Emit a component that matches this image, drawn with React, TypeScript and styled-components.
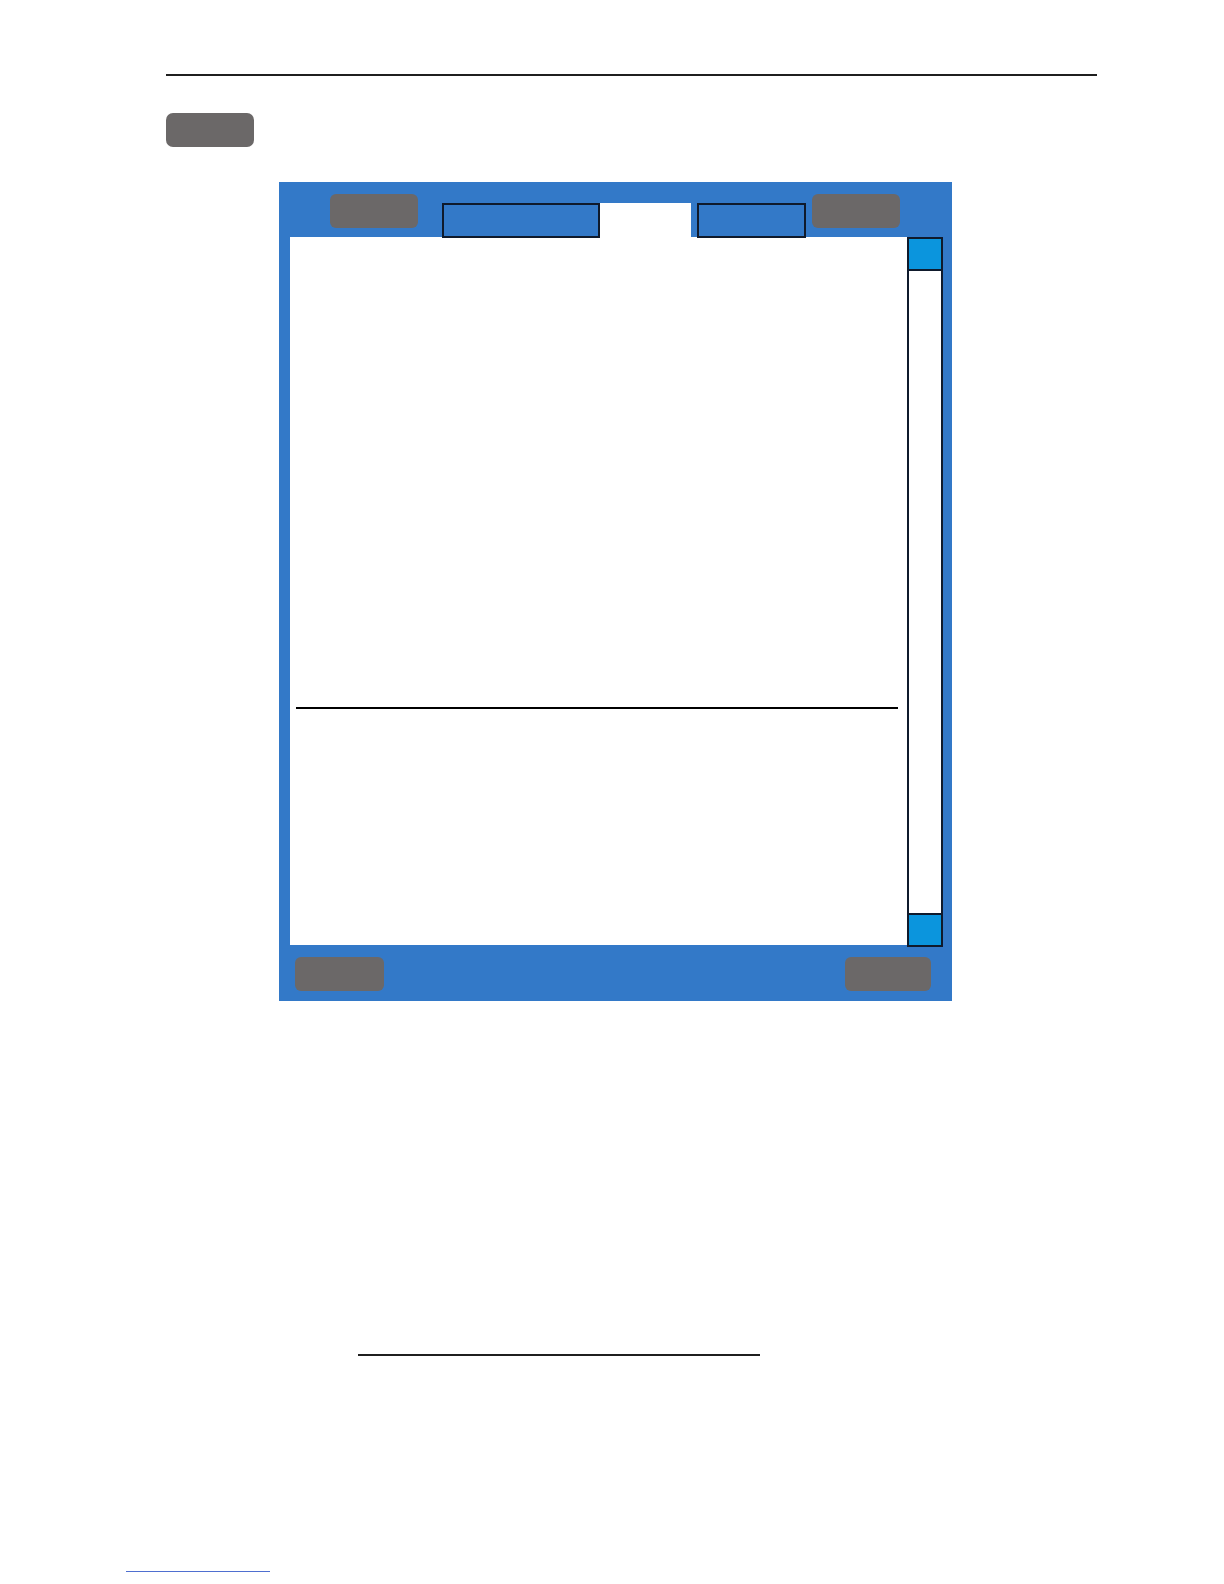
import React from 'react';
import styled, { createGlobalStyle } from 'styled-components';

const colors = {
    panel: '#3379c8',
    button: '#6b6868',
    thumb: '#0b95dd',
    ink: '#1f1f1f',
    frame: '#0f1a2c',
    link: '#4f6fd0',
};

const GlobalStyle = createGlobalStyle`
    html, body {
        margin: 0;
        padding: 0;
        background: #ffffff;
        font-family: "Liberation Sans", Arial, sans-serif;
    }
`;

const Page = styled.div`
    width: 1224px;
    height: 1584px;
    display: flex;
    flex-direction: column;
    align-items: flex-start;
    overflow: hidden;
`;

const Rule = styled.hr<{ $top: number; $left: number; $width: number }>`
    margin: ${({ $top }) => $top}px 0 0 ${({ $left }) => $left}px;
    width: ${({ $width }) => $width}px;
    height: 2px;
    border: none;
    background: ${colors.ink};
`;

const Badge = styled.div`
    margin: 37px 0 0 166px;
    width: 88px;
    height: 34px;
    border-radius: 7px;
    background: ${colors.button};
`;

const Panel = styled.section`
    margin: 35px 0 0 279px;
    width: 673px;
    height: 819px;
    background: ${colors.panel};
    display: flex;
    flex-direction: column;
`;

const TopBar = styled.div`
    height: 55px;
    display: flex;
    align-items: flex-start;
    padding-left: 51px;
    position: relative;
    z-index: 1;
`;

const SoftKey = styled.div<{ $width?: number }>`
    width: ${({ $width }) => $width ?? 88}px;
    height: 34px;
    border-radius: 6px;
    background: ${colors.button};
`;

const TopKey = styled(SoftKey)<{ $gap?: number }>`
    margin: 12px 0 0 ${({ $gap }) => $gap ?? 0}px;
`;

const Tab = styled.div<{ $width: number; $gap: number }>`
    margin: 21px 0 0 ${({ $gap }) => $gap}px;
    width: ${({ $width }) => $width}px;
    height: 35px;
    box-sizing: border-box;
    border: 2px solid ${colors.frame};
    background: ${colors.panel};
`;

const ActiveTab = styled.div`
    margin-top: 21px;
    width: 91px;
    height: 34px;
    background: #ffffff;
`;

const Body = styled.div`
    height: 708px;
    display: flex;
    padding: 0 9px 0 11px;
`;

const Content = styled.div`
    flex: 1;
    background: #ffffff;
    padding: 470px 9px 0 6px;
`;

const Divider = styled.div`
    height: 2px;
    background: #000000;
`;

const ScrollTrack = styled.div`
    width: 36px;
    height: 710px;
    box-sizing: border-box;
    border: 2px solid ${colors.frame};
    background: #ffffff;
    display: flex;
    flex-direction: column;
    justify-content: space-between;
    position: relative;
    z-index: 1;
`;

const Thumb = styled.div<{ $edge: 'top' | 'bottom' }>`
    height: 30px;
    background: ${colors.thumb};
    ${({ $edge }) => ($edge === 'top' ? 'border-bottom' : 'border-top')}: 2px solid ${colors.frame};
`;

const BottomBar = styled.div`
    flex: 1;
    display: flex;
    justify-content: space-between;
    align-items: flex-start;
    padding: 12px 21px 0 16px;
`;

const FooterLink = styled.div`
    margin: 215px 0 0 126px;
    width: 144px;
    height: 1px;
    background: ${colors.link};
`;

const App: React.FC = () => {
    return (
        <>
            <GlobalStyle />
            <Page>
                <Rule $top={74} $left={166} $width={931} />
                <Badge />
                <Panel>
                    <TopBar>
                        <TopKey />
                        <Tab $width={158} $gap={24} />
                        <ActiveTab />
                        <Tab $width={109} $gap={6} />
                        <TopKey $gap={6} />
                    </TopBar>
                    <Body>
                        <Content>
                            <Divider />
                        </Content>
                        <ScrollTrack>
                            <Thumb $edge="top" />
                            <Thumb $edge="bottom" />
                        </ScrollTrack>
                    </Body>
                    <BottomBar>
                        <SoftKey $width={89} />
                        <SoftKey $width={86} />
                    </BottomBar>
                </Panel>
                <Rule $top={353} $left={358} $width={402} />
                <FooterLink />
            </Page>
        </>
    );
};

export default App;
